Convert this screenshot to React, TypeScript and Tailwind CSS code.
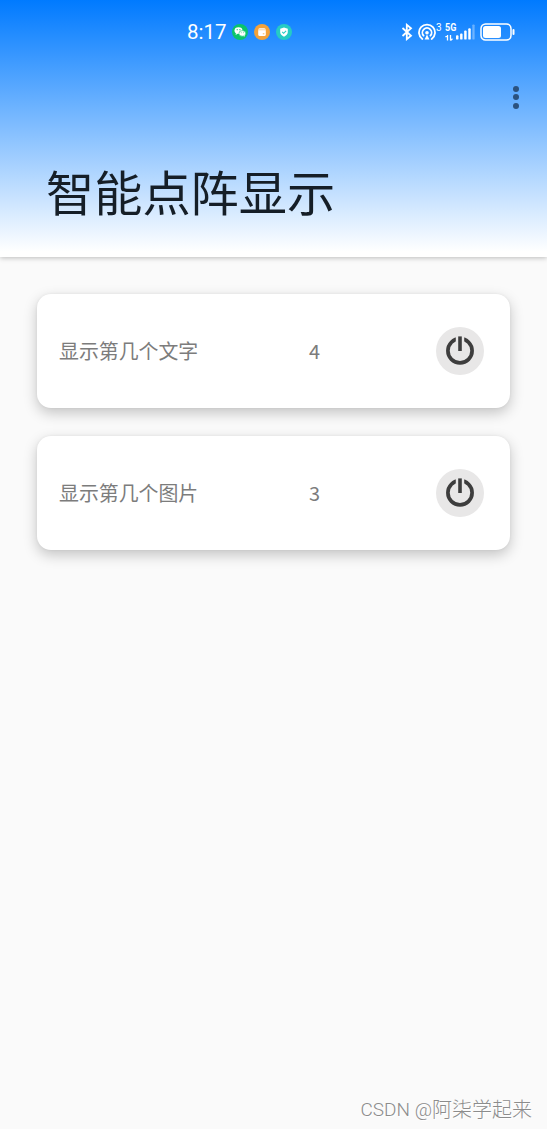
interface DisplayItem {
  id: string
  label: string
  value: number
}

const items: DisplayItem[] = [
  { id: 'text', label: '显示第几个文字', value: 4 },
  { id: 'image', label: '显示第几个图片', value: 3 },
]

function AppBadges() {
  return (
    <div className="flex items-center gap-[6px]">
      <svg className="h-4 w-4" viewBox="0 0 16 16">
        <circle cx="8" cy="8" r="8" fill="#0ac46b" />
        <ellipse cx="6.5" cy="6.6" rx="4" ry="3.4" fill="#fff" />
        <path d="M4 9l-.4 1.9 2-1.1z" fill="#fff" />
        <ellipse cx="10.3" cy="9.4" rx="3.4" ry="2.8" fill="#fff" stroke="#0ac46b" strokeWidth=".6" />
        <path d="M11.4 11.8l1.4.9-.2-1.6z" fill="#fff" />
        <circle cx="5.2" cy="5.7" r=".6" fill="#0ac46b" />
        <circle cx="7.9" cy="5.7" r=".6" fill="#0ac46b" />
        <circle cx="9.2" cy="8.8" r=".45" fill="#0ac46b" />
        <circle cx="11.3" cy="8.8" r=".45" fill="#0ac46b" />
      </svg>
      <svg className="h-4 w-4" viewBox="0 0 16 16">
        <circle cx="8" cy="8" r="8" fill="#f3a23a" />
        <rect x="4.2" y="4.3" width="7.6" height="7.6" rx="1.5" fill="#fff" />
        <path d="M4.2 5.8h7.6" stroke="#f3a23a" strokeWidth=".5" />
        <path d="M8.8 9.8h1.6" stroke="#f3a23a" strokeWidth=".8" />
      </svg>
      <svg className="h-4 w-4" viewBox="0 0 16 16">
        <circle cx="8" cy="8" r="8" fill="#25cbc4" />
        <path d="M8 3.5l3.8 1.3v3.3c0 2.1-1.5 3.6-3.8 4.6-2.3-1-3.8-2.5-3.8-4.6V4.8z" fill="#fff" />
        <path d="M6.2 7.9l1.4 1.4 2.5-2.5" fill="none" stroke="#25cbc4" strokeWidth="1.1" />
      </svg>
    </div>
  )
}

function SystemIcons() {
  return (
    <div className="flex items-center text-white">
      <svg className="h-[18px] w-3" viewBox="0 0 12 18" fill="none" stroke="currentColor" strokeWidth="1.8">
        <path d="M1.5 5l8.5 7.8-4.2 3.4V1.8L10 5.2 1.5 13" />
      </svg>
      <svg className="ml-[5px] h-[18px] w-[18px]" viewBox="0 0 18 18" fill="none" stroke="currentColor" strokeWidth="1.8" strokeLinecap="round">
        <path d="M4.3 16A8 8 0 1 1 13.7 16" />
        <path d="M5.6 12.7a4.6 4.6 0 1 1 6.8 0" />
        <circle cx="9" cy="9.8" r="1.8" fill="currentColor" stroke="none" />
        <path d="M9 11.5l2.4 5H6.6z" fill="currentColor" stroke="none" />
      </svg>
      <span className="-mt-[9px] w-[6px] text-[10px] leading-[10px]">3</span>
      <div className="ml-[3px] flex h-[18px] w-[30px] items-end justify-between">
        <div className="flex h-full w-[11px] flex-col justify-between">
          <span className="h-[10px] w-[12px] origin-left scale-x-90 text-[10px] leading-[10px] font-bold">5G</span>
          <svg className="h-[6px] w-[8px]" viewBox="0 0 8 6" fill="none" stroke="currentColor" strokeWidth="1.3">
            <path d="M2.5 0v5.5M.5 2l2-1.5M5.5 0v5.5M7.5 3.8l-2 1.7" />
          </svg>
        </div>
        <svg className="h-[18px] w-[20px]" viewBox="0 0 20 18" fill="currentColor">
          <rect x="0" y="12.5" width="2.6" height="4.5" rx="1" />
          <rect x="4.3" y="10.5" width="2.6" height="6.5" rx="1" />
          <rect x="8.6" y="7.5" width="2.6" height="9.5" rx="1" />
          <rect x="12.9" y="5" width="2.6" height="12" rx="1" />
          <rect x="17.2" y="1" width="2.4" height="16" rx="1" opacity=".35" />
        </svg>
      </div>
      <svg className="ml-[5px] h-[18px] w-9" viewBox="0 0 36 18">
        <rect x="1" y="1" width="30" height="16" rx="4.5" fill="none" stroke="currentColor" strokeWidth="1.5" />
        <rect x="3" y="3" width="18" height="12" rx="2.5" fill="currentColor" />
        <path d="M33.5 7v4" stroke="currentColor" strokeWidth="2" strokeLinecap="round" />
      </svg>
    </div>
  )
}

function PowerButton() {
  return (
    <button className="flex h-12 w-12 shrink-0 items-center justify-center rounded-full bg-[#e8e7e7]">
      <svg className="h-8 w-8" viewBox="0 0 32 32">
        <circle cx="16" cy="15.8" r="12.1" fill="none" stroke="#3d3d3d" strokeWidth="3.7" />
        {/* gap in the ring around the bar */}
        <rect x="11.8" y="0" width="8.4" height="12" fill="#e8e7e7" />
        <rect x="14.2" y="1.4" width="3.6" height="14.6" fill="#3d3d3d" />
      </svg>
    </button>
  )
}

function DisplayCard({ item }: { item: DisplayItem }) {
  return (
    <div className="flex h-[114px] items-center rounded-[14px] bg-white pr-[26px] pl-[22px] text-[19.9px] text-[#7c7c7c] shadow-[0_5px_14px_rgba(0,0,0,0.22),0_0_3px_rgba(0,0,0,0.06)]">
      <span className="w-[250px] whitespace-nowrap">{item.label}</span>
      <span className="flex-1">{item.value}</span>
      <PowerButton />
    </div>
  )
}

export default function App() {
  return (
    <div className="flex h-[1129px] w-full flex-col bg-[#fafafa] font-['Noto_Sans_CJK_SC',sans-serif]">
      <header className="h-[257px] shrink-0 bg-linear-to-b/srgb from-[#007aff] to-white to-98% shadow-[0_1px_5px_rgba(0,0,0,0.25)]">
        <div className="flex h-16 items-center pr-[31px] pl-[187px] font-[Roboto,sans-serif]">
          <span className="mr-[5px] w-10 text-[20.5px] leading-6 text-white">8:17</span>
          <AppBadges />
          <div className="ml-auto">
            <SystemIcons />
          </div>
        </div>
        <div className="flex h-[66px] items-center justify-end pr-[28px]">
          <button className="flex flex-col gap-[2.5px]">
            <span className="h-[6px] w-[6px] rounded-full bg-[#2b527f]" />
            <span className="h-[6px] w-[6px] rounded-full bg-[#2b527f]" />
            <span className="h-[6px] w-[6px] rounded-full bg-[#2b527f]" />
          </button>
        </div>
        <h1 className="mt-[25px] pl-[46px] text-[48.2px] leading-[70px] text-[#151e27]">智能点阵显示</h1>
      </header>

      <main className="flex flex-1 flex-col gap-7 px-[37px] pt-[37px]">
        {items.map(item => (
          <DisplayCard key={item.id} item={item} />
        ))}
      </main>

      <footer className="flex h-[38px] items-center justify-end pr-[15px] font-[Roboto,'Noto_Sans_CJK_SC',sans-serif] text-[20px] font-light whitespace-nowrap text-[#8c8c8c] [text-shadow:1px_1px_0_#fff]">
        <span className="text-[19px]">CSDN @</span>
        <span>阿柒学起来</span>
      </footer>
    </div>
  )
}
